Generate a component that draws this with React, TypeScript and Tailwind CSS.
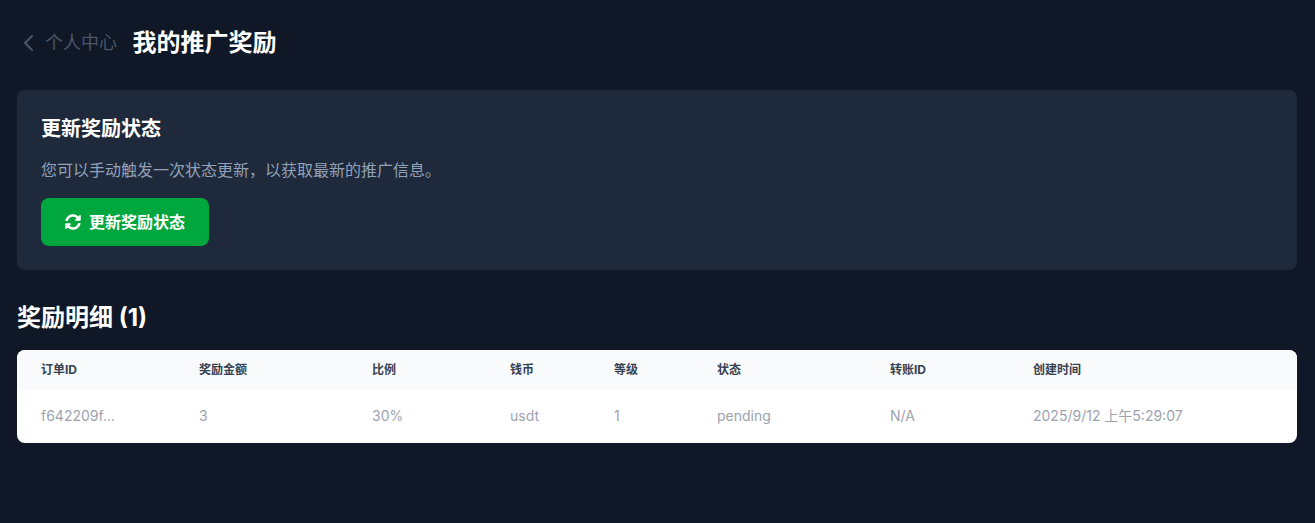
import { FaSyncAlt } from 'react-icons/fa';

const gridCols =
  'grid grid-cols-[158px_173px_138px_104px_103px_173px_143px_1fr]';

const headers = ['订单ID', '奖励金额', '比例', '钱币', '等级', '状态', '转账ID', '创建时间'];
const row = ['f642209f...', '3', '30%', 'usdt', '1', 'pending', 'N/A', '2025/9/12 上午5:29:07'];

export default function App() {
  return (
    <div className="min-h-[523px] bg-gray-900 pl-[17px] pr-[18px] pt-[25px] font-['Inter','Noto_Sans_CJK_SC',sans-serif]">
      {/* Header row */}
      <div className="mb-[29px] flex h-[36px] items-center">
        <div className="flex items-center text-gray-600">
          <svg width="24" height="24" viewBox="0 0 24 24" fill="none" stroke="currentColor" strokeWidth={2} strokeLinecap="round" strokeLinejoin="round">
            <path d="M15 19l-7-7 7-7" />
          </svg>
          <span className="ml-[4px] text-[18px] leading-7">个人中心</span>
        </div>
        <h1 className="ml-[15.5px] text-[24px] font-bold leading-8 text-white">我的推广奖励</h1>
      </div>

      {/* Update card */}
      <div className="rounded-lg bg-[#1e293b] px-6 pb-6 pt-[25px]">
        <h2 className="text-[20px] font-bold leading-7 text-white">更新奖励状态</h2>
        <p className="mt-[15px] text-[16px] leading-6 text-slate-400">
          您可以手动触发一次状态更新，以获取最新的推广信息。
        </p>
        <button className="mt-[16px] flex h-[48px] w-[168px] items-center justify-center gap-2 rounded-lg bg-[#00a63e] text-[16px] font-bold text-white">
          <FaSyncAlt size={16} />
          更新奖励状态
        </button>
      </div>

      {/* Rewards table */}
      <h2 className="mt-[32px] text-[24px] font-bold leading-8 text-white">奖励明细 (1)</h2>
      <div className="mt-[16px] overflow-hidden rounded-lg bg-white">
        <div className={`${gridCols} h-[40px] items-center bg-gray-50 text-[12px] font-bold text-gray-700`}>
          {headers.map((h) => (
            <div key={h} className="pl-6">
              {h}
            </div>
          ))}
        </div>
        <div className={`${gridCols} h-[52.5px] items-center pb-px text-[14px] text-[#9ca3af]`}>
          {row.map((c) => (
            <div key={c} className="pl-6">
              {c}
            </div>
          ))}
        </div>
      </div>
    </div>
  );
}
